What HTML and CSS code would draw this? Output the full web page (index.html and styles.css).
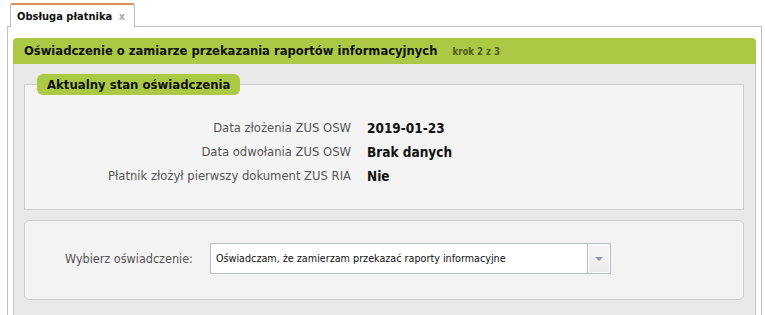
FILE: index.html
```html
<!DOCTYPE html>
<html lang="pl">
<head>
    <meta charset="UTF-8">
    <title>Obsługa płatnika</title>
    <link rel="stylesheet" href="styles.css">
</head>
<body>
    <div class="tabs">
        <div class="tab">Obsługa płatnika <span class="tab-close">x</span></div>
    </div>
    <div class="panel">
        <div class="step-header">
            Oświadczenie o zamiarze przekazania raportów informacyjnych
            <span class="step-counter">krok 2 z 3</span>
        </div>
        <div class="step-body">
            <fieldset class="box">
                <legend class="box-title">Aktualny stan oświadczenia</legend>
                <div class="info-row">
                    <span class="info-label">Data złożenia ZUS OSW</span>
                    <span class="info-value">2019-01-23</span>
                </div>
                <div class="info-row">
                    <span class="info-label">Data odwołania ZUS OSW</span>
                    <span class="info-value">Brak danych</span>
                </div>
                <div class="info-row">
                    <span class="info-label">Płatnik złożył pierwszy dokument ZUS RIA</span>
                    <span class="info-value">Nie</span>
                </div>
            </fieldset>

            <div class="box box-rounded">
                <div class="choice-row">
                    <label class="choice-label">Wybierz oświadczenie:</label>
                    <div class="combo">
                        <span class="combo-text">Oświadczam, że zamierzam przekazać raporty informacyjne</span>
                        <span class="combo-btn"><span class="combo-arrow"></span></span>
                    </div>
                </div>
            </div>
        </div>
    </div>
</body>
</html>
```

FILE: styles.css
```css
body {
    margin: 0;
    background-color: #ffffff;
    font-family: Tahoma, "DejaVu Sans Condensed", "DejaVu Sans", sans-serif;
    font-size: 12.9px;
    color: #222;
}

.tabs {
    padding: 3px 0 0 10px;
    height: 26px;
    box-sizing: border-box;
    position: relative;
    z-index: 1;
}

.tab {
    display: inline-block;
    height: 24px;
    box-sizing: border-box;
    padding: 5px 9px 0 6px;
    background-color: #ffffff;
    border: 1px solid #b9c0cb;
    border-top: 2px solid #d98f55;
    border-bottom: none;
    border-radius: 3px 3px 0 0;
    font-weight: bold;
    font-size: 11px;
    color: #111;
}

.tab-close {
    margin-left: 3px;
    color: #a9a9a9;
    font-weight: bold;
}

.panel {
    margin: 0 3px 0 7px;
    border: 1px solid #b9c0cb;
    border-bottom: none;
    padding: 11px 5px 0 5px;
    height: 289px;
    box-sizing: border-box;
}

.step-header {
    height: 26px;
    line-height: 26px;
    padding-left: 11px;
    background-color: #acc946;
    border-radius: 4px 4px 0 0;
    font-weight: bold;
    font-size: 12.85px;
    color: #111;
}

.step-counter {
    margin-left: 11px;
    font-size: 9.6px;
    color: #4c5d1d;
}

.step-body {
    background-color: #e9e9e9;
    border-left: 1px solid #c6c6c6;
    border-right: 1px solid #c6c6c6;
    padding: 10px 11px 20px 10px;
}

.box {
    margin: 0;
    background-color: #f4f4f4;
    border: 1px solid #cdcdcd;
}

fieldset.box {
    padding: 0 12px 21px 12px;
}

.box-title {
    padding: 0 10px;
    height: 21px;
    line-height: 21px;
    background-color: #acc946;
    border-radius: 6px;
    font-weight: bold;
    font-size: 13px;
    color: #111;
}

.info-row {
    display: flex;
    height: 24px;
    line-height: 24px;
}

.info-row:first-of-type {
    margin-top: 21px;
}

.info-label {
    width: 314px;
    margin-right: 16px;
    text-align: right;
    color: #555;
}

.info-value {
    font-weight: bold;
    font-size: 13.5px;
    color: #111;
}

.box-rounded {
    margin-top: 10px;
    border-radius: 5px;
    background-color: #f3f3f3;
    padding: 22px 0 25px 40px;
}

.choice-row {
    display: flex;
    align-items: center;
}

.choice-label {
    width: 145px;
    font-size: 12.5px;
    color: #555;
}

.combo {
    display: flex;
    width: 401px;
    height: 31px;
    box-sizing: border-box;
    border: 1px solid #b6bdcc;
    background-color: #ffffff;
}

.combo-text {
    flex: 1;
    padding-left: 5px;
    line-height: 29px;
    font-size: 10.7px;
    color: #111;
}

.combo-btn {
    width: 22px;
    border-left: 1px solid #b6bdcc;
    box-shadow: inset 1px 1px 0 #ffffff, inset -1px -1px 0 #ffffff;
    background: linear-gradient(#f7f7f7, #eaeaea);
    display: flex;
    align-items: center;
    justify-content: center;
}

.combo-arrow {
    width: 0;
    height: 0;
    border-left: 4px solid transparent;
    border-right: 4px solid transparent;
    border-top: 4px solid #8d9bb6;
}
```
